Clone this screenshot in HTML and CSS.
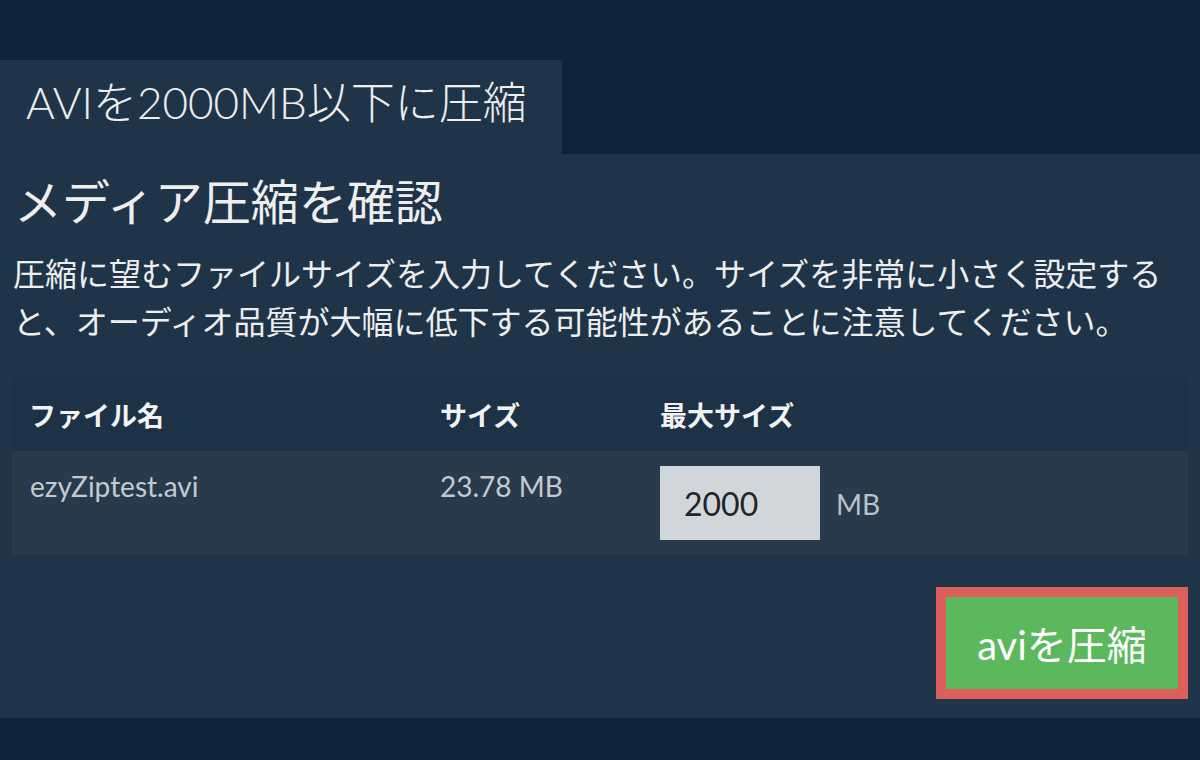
FILE: index.html
```html
<!DOCTYPE html>
<html lang="ja">
<head>
<meta charset="utf-8">
<title>AVIを2000MB以下に圧縮</title>
<link rel="stylesheet" href="styles.css">
</head>
<body>
<div class="page">
  <div class="tab">AVIを2000MB以下に圧縮</div>
  <section class="panel">
    <h2 class="heading">メディア圧縮を確認</h2>
    <p class="desc">圧縮に望むファイルサイズを入力してください。サイズを非常に小さく設定すると、オーディオ品質が大幅に低下する可能性があることに注意してください。</p>
    <div class="table">
      <div class="row head">
        <div class="cell">ファイル名</div>
        <div class="cell">サイズ</div>
        <div class="cell">最大サイズ</div>
      </div>
      <div class="row body">
        <div class="cell">ezyZiptest.avi</div>
        <div class="cell">23.78 MB</div>
        <div class="cell max">
          <input class="size-input" type="text" value="2000">
          <span class="unit">MB</span>
        </div>
      </div>
    </div>
    <div class="actions">
      <button class="btn" type="button">aviを圧縮</button>
    </div>
  </section>
</div>
</body>
</html>
```

FILE: styles.css
```css
html, body {
  margin: 0;
  padding: 0;
}
body {
  background: #0f2339;
  color: #eeeeee;
  font-family: Lato, "Noto Sans CJK JP", sans-serif;
  width: 1200px;
  height: 760px;
  overflow: hidden;
}
.page {
  padding-top: 60px;
}
.tab {
  width: 562px;
  height: 94px;
  box-sizing: border-box;
  padding-left: 26px;
  padding-bottom: 10px;
  background: #203449;
  font-size: 44px;
  font-weight: 300;
  line-height: 84px;
  white-space: nowrap;
}
.panel {
  background: #203449;
  height: 564px;
  box-sizing: border-box;
  padding: 19px 12px 0 12px;
}
.heading {
  margin: 0 0 0 2px;
  font-size: 48px;
  font-weight: 400;
  line-height: 57px;
}
.desc {
  margin: 20px 0 0 0;
  padding-left: 1px;
  font-size: 32px;
  line-height: 48px;
}
.table {
  margin-top: 31px;
}
.row {
  display: grid;
  grid-template-columns: 428px 220px 1fr;
}
.row.head {
  background: #1e3247;
  height: 74px;
  align-items: center;
}
.row.head .cell {
  font-size: 27px;
  font-weight: 700;
  color: #f2f2f2;
  padding-left: 17px;
}
.row.head .cell + .cell {
  padding-left: 0;
}
.row.body {
  background: #2a3a4d;
  height: 104px;
  align-items: start;
}
.row.body .cell {
  font-size: 28px;
  color: #c3cad2;
  padding-left: 18px;
  padding-top: 20px;
  line-height: 30px;
}
.row.body .cell + .cell {
  padding-left: 0;
}
.row.body .cell.max {
  padding-top: 15px;
  display: flex;
  align-items: center;
  gap: 16px;
}
.size-input {
  width: 160px;
  height: 74px;
  box-sizing: border-box;
  border: 0;
  margin: 0;
  padding: 0 0 0 24px;
  background: #d1d6db;
  color: #212529;
  font-family: Lato, "Noto Sans CJK JP", sans-serif;
  font-size: 32px;
  outline: none;
}
.unit {
  color: #b9c1ca;
  font-size: 28px;
  padding-top: 2px;
}
.actions {
  display: flex;
  justify-content: flex-end;
  margin-top: 32px;
}
.btn {
  box-sizing: border-box;
  width: 252px;
  height: 112px;
  border: 10px solid #dc5f5c;
  background: #5cb85c;
  color: #ffffff;
  font-family: Lato, "Noto Sans CJK JP", sans-serif;
  font-size: 40px;
  padding: 0;
  margin: 0;
  cursor: pointer;
}
```
